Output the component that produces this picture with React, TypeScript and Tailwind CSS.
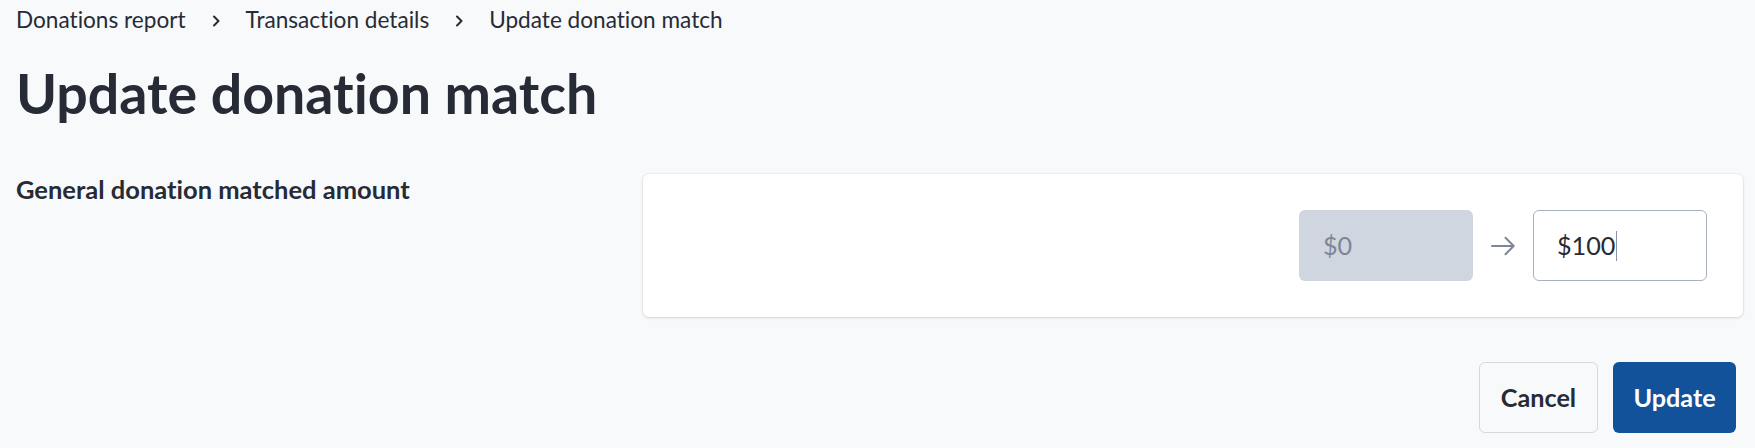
import React from "react";

function Chevron() {
  return (
    <svg width="10" height="14" viewBox="0 0 10 14" className="mx-[25px] mt-[1px]" aria-hidden>
      <path d="M3 2.5 L7.5 7 L3 11.5" fill="none" stroke="#262b36" strokeWidth="2" strokeLinecap="round" strokeLinejoin="round" />
    </svg>
  );
}

function Arrow() {
  return (
    <svg width="24" height="24" viewBox="0 0 24 24" aria-hidden>
      <path d="M1 12 H22.5 M14.5 3.8 L22.7 12 L14.5 20.2" fill="none" stroke="#7d8699" strokeWidth="2" strokeLinecap="round" strokeLinejoin="round" />
    </svg>
  );
}

export default function App() {
  return (
    <div className="min-h-[448px] w-full bg-[#f8f9fb] text-[#262b36] pl-4 pr-[12px] pt-[4px] [font-variant-ligatures:none]" style={{ fontFamily: "Lato, 'Noto Sans', sans-serif" }}>
      <nav className="flex items-center text-[22.6px] leading-[32px]">
        <span>Donations report</span>
        <Chevron />
        <span>Transaction details</span>
        <Chevron />
        <span>Update donation match</span>
      </nav>
      <h1 className="mt-[25px] text-[55.5px] leading-[64px] font-bold">Update donation match</h1>
      <div className="mt-[49px] flex items-start">
        <div className="w-[627px] pt-[1px] text-[25.5px] leading-[28px] font-bold">General donation matched amount</div>
        <div className="flex-1 rounded-md bg-white shadow-[0_1px_3px_rgba(16,24,40,0.12),0_0_0_1px_rgba(16,24,40,0.04)] p-9 flex justify-end items-center">
          <div className="w-[174px] h-[71px] rounded-md bg-[#d0d6e0] flex items-center pl-[24px] text-[25.2px] text-[#7d8699]">$0</div>
          <div className="mx-[18px] flex items-center"><Arrow /></div>
          <div className="w-[174px] h-[71px] rounded-md bg-white border border-[#a9b0bd] flex items-center pl-[23px] text-[25.2px] text-[#262b36]">
            <span>$100</span>
            <span className="ml-[1px] inline-block w-[1px] h-[30px] bg-[#8a93a3]" />
          </div>
        </div>
      </div>
      <div className="mt-[45px] flex justify-end gap-[15px] pr-[7px]">
        <button className="h-[71px] w-[119px] rounded-md border border-[#d5d8dd] bg-[#f8f9fb] text-[25.2px] font-bold text-[#262b36]">Cancel</button>
        <button className="h-[71px] w-[123px] rounded-md bg-[#11529b] text-[25.2px] font-bold text-white">Update</button>
      </div>
    </div>
  );
}
